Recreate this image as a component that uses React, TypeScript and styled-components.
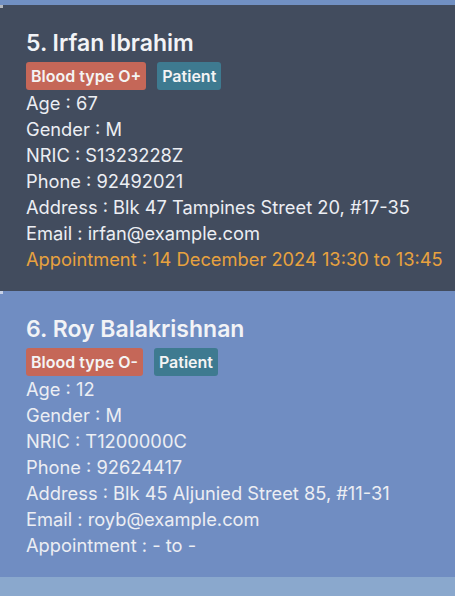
import React from "react";
import styled, { createGlobalStyle } from "styled-components";

const Global = createGlobalStyle`
  html, body { margin: 0; padding: 0; }
  body {
    background: #8aa8cd;
    font-family: Inter, "Noto Sans", sans-serif;
    width: 455px;
    height: 596px;
    overflow: hidden;
  }
`;

const List = styled.div`
  display: flex;
  flex-direction: column;
`;

const Stub = styled.div`
  height: 5px;
  background: #7190c3;
`;

const Card = styled.div<{ $selected?: boolean }>`
  position: relative;
  background: ${(p) => (p.$selected ? "#424c5e" : "#708dc2")};
  padding: 23px 0 19px 26px;
  display: flex;
  flex-direction: column;
  color: #eef0f4;
  &::before {
    content: "";
    position: absolute;
    left: 0;
    top: 0;
    width: 3px;
    height: 3px;
    background: rgba(255, 255, 255, 0.6);
  }
`;

const Title = styled.div`
  font-size: 23px;
  font-weight: 600;
  line-height: 30px;
  color: #f2f3f6;
`;

const Tags = styled.div`
  display: flex;
  gap: 11px;
  margin: 4px 0 0 0;
`;

const Tag = styled.span<{ $kind: "blood" | "role" }>`
  background: ${(p) => (p.$kind === "blood" ? "#c56758" : "#3e7a90")};
  color: #f4f4f4;
  font-size: 16px;
  font-weight: 600;
  line-height: 28px;
  height: 28px;
  padding: 0 5px;
  border-radius: 3px;
`;

const Line = styled.div<{ $accent?: boolean }>`
  font-size: 18.3px;
  line-height: 26px;
  color: ${(p) => (p.$accent ? "#e8a23e" : "#eceef3")};
  white-space: nowrap;
`;

type Person = {
  idx: number;
  name: string;
  blood: string;
  age: number;
  gender: string;
  nric: string;
  phone: string;
  address: string;
  email: string;
  appt: string;
  hasAppt: boolean;
  selected: boolean;
};

const people: Person[] = [
  {
    idx: 5,
    name: "Irfan Ibrahim",
    blood: "O+",
    age: 67,
    gender: "M",
    nric: "S1323228Z",
    phone: "92492021",
    address: "Blk 47 Tampines Street 20, #17-35",
    email: "irfan@example.com",
    appt: "14 December 2024 13:30 to 13:45",
    hasAppt: true,
    selected: true,
  },
  {
    idx: 6,
    name: "Roy Balakrishnan",
    blood: "O-",
    age: 12,
    gender: "M",
    nric: "T1200000C",
    phone: "92624417",
    address: "Blk 45 Aljunied Street 85, #11-31",
    email: "royb@example.com",
    appt: "- to -",
    hasAppt: false,
    selected: false,
  },
];

export default function App() {
  return (
    <>
      <Global />
      <List>
        <Stub />
        {people.map((p) => (
          <Card key={p.idx} $selected={p.selected}>
            <Title>
              {p.idx}. {p.name}
            </Title>
            <Tags>
              <Tag $kind="blood">Blood type {p.blood}</Tag>
              <Tag $kind="role">Patient</Tag>
            </Tags>
            <Line>Age : {p.age}</Line>
            <Line>Gender : {p.gender}</Line>
            <Line>NRIC : {p.nric}</Line>
            <Line>Phone : {p.phone}</Line>
            <Line>Address : {p.address}</Line>
            <Line>Email : {p.email}</Line>
            <Line $accent={p.hasAppt}>Appointment : {p.appt}</Line>
          </Card>
        ))}
      </List>
    </>
  );
}
